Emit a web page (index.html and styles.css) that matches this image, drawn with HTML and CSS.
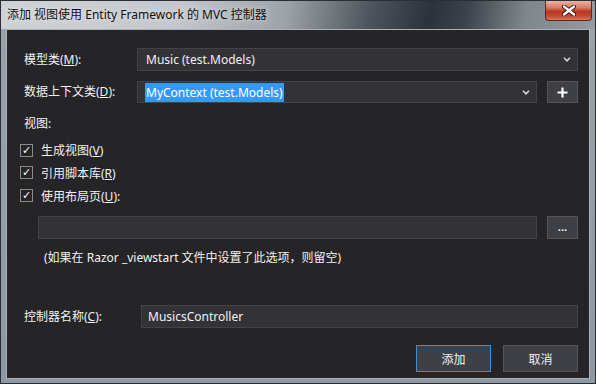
FILE: index.html
```html
<!DOCTYPE html>
<html>
<head>
  <meta charset="UTF-8">
  <title>添加 视图使用 Entity Framework 的 MVC 控制器</title>
  <link rel="stylesheet" href="styles.css">
</head>
<body>
<div class="window">
  <div class="titlebar">
    <span class="title">添加 视图使用 Entity Framework 的 MVC 控制器</span>
    <div class="close">
      <svg width="14" height="11" viewBox="0 0 14 11">
        <path d="M2 1.5 L12 9.5 M12 1.5 L2 9.5" stroke="#3a1008" stroke-width="4.2" stroke-linecap="round"/>
        <path d="M2 1.5 L12 9.5 M12 1.5 L2 9.5" stroke="#fff" stroke-width="2.4" stroke-linecap="round"/>
      </svg>
    </div>
  </div>
  <div class="client">
    <div class="row row-model">
      <div class="label">模型类(<u>M</u>):</div>
      <div class="select">
        <span>Music (test.Models)</span>
        <svg class="chev" width="8" height="5" viewBox="0 0 8 5"><path d="M1 0.8 L4 3.8 L7 0.8" fill="none" stroke="#d8d8d8" stroke-width="1.6"/></svg>
      </div>
    </div>
    <div class="row row-context">
      <div class="label">数据上下文类(<u>D</u>):</div>
      <div class="field">
        <div class="select">
          <span class="selected">MyContext (test.Models)</span>
          <svg class="chev" width="8" height="5" viewBox="0 0 8 5"><path d="M1 0.8 L4 3.8 L7 0.8" fill="none" stroke="#d8d8d8" stroke-width="1.6"/></svg>
        </div>
        <div class="btn btn-small">
          <svg width="11" height="11" viewBox="0 0 11 11"><path d="M5.5 0.5 V10.5 M0.5 5.5 H10.5" stroke="#fff" stroke-width="2.2"/></svg>
        </div>
      </div>
    </div>
    <div class="section">视图:</div>
    <div class="checks">
      <div class="check"><span class="box">✓</span><span>生成视图(<u>V</u>)</span></div>
      <div class="check"><span class="box">✓</span><span>引用脚本库(<u>R</u>)</span></div>
      <div class="check"><span class="box">✓</span><span>使用布局页(<u>U</u>):</span></div>
    </div>
    <div class="layout-row">
      <div class="input"></div>
      <div class="btn btn-small dots">...</div>
    </div>
    <div class="note">(如果在 Razor _viewstart 文件中设置了此选项，则留空)</div>
    <div class="row row-name">
      <div class="label">控制器名称(<u>C</u>):</div>
      <div class="input">MusicsController</div>
    </div>
    <div class="actions">
      <div class="btn btn-main default">添加</div>
      <div class="btn btn-main">取消</div>
    </div>
  </div>
</div>
</body>
</html>
```

FILE: styles.css
```css
body {
  margin: 0;
  padding: 0;
  background: #fff;
  font-family: "Noto Sans", "Noto Sans CJK SC", sans-serif;
  font-size: 12px;
}
.window {
  box-sizing: border-box;
  width: 596px;
  height: 384px;
  border: 1px solid #2a2f35;
  background: linear-gradient(to bottom, #9aa3aa, #8d98a1);
  display: flex;
  flex-direction: column;
}
.titlebar {
  height: 28px;
  display: flex;
  justify-content: space-between;
  align-items: flex-start;
  background: linear-gradient(100deg, #cfd2d5 0%, #c4c8cc 30%, #9ca2a7 48%, #4d545b 62%, #2b3239 72%, #3b4249 78%, #7f868c 88%, #959ba0 100%);
}
.title {
  margin: 6px 0 0 6px;
  color: #111;
  font-size: 12px;
  line-height: 16px;
  text-shadow: 0 0 6px rgba(255,255,255,.8);
}
.close {
  width: 45px;
  height: 19px;
  margin-right: 3px;
  border: 1px solid #5a2a22;
  border-top: none;
  border-radius: 0 0 4px 4px;
  background: linear-gradient(to bottom, #e6b3a6 0%, #d87b66 35%, #b83820 55%, #c24a30 80%, #d9785a 100%);
  display: flex;
  align-items: center;
  justify-content: center;
}
.client {
  flex: 1;
  margin: 0 5px 4px 5px;
  border: 1px solid #a9b3bb;
  background: #252527;
  color: #f1f1f1;
  padding: 0 11px 0 17px;
}
.row {
  display: grid;
  grid-template-columns: 113px 1fr;
  align-items: center;
}
.row-model {
  margin-top: 18px;
}
.row-context {
  margin-top: 10px;
}
.label {
  line-height: 16px;
}
.field {
  display: flex;
  gap: 10px;
}
.select,
.input {
  box-sizing: border-box;
  height: 23px;
  background: #333337;
  border: 1px solid #434346;
  display: flex;
  align-items: center;
  padding: 0 6px 0 8px;
  color: #f1f1f1;
  line-height: 19px;
}
.select {
  flex: 1;
  justify-content: space-between;
}
.row-context .select {
  height: 22px;
  padding-left: 7px;
}
.selected {
  background: #3399ff;
  color: #fff;
  padding: 0 1px;
}
.btn {
  box-sizing: border-box;
  background: #3f3f46;
  border: 1px solid #555558;
  color: #f1f1f1;
  display: flex;
  align-items: center;
  justify-content: center;
}
.btn-small {
  width: 31px;
  height: 22px;
}
.section {
  margin-top: 13px;
  line-height: 16px;
}
.checks {
  margin: 7px 0 0 -4px;
}
.check {
  height: 22px;
  display: flex;
  align-items: center;
  gap: 8px;
}
.check + .check {
  height: 23px;
}
.box {
  box-sizing: border-box;
  width: 13px;
  height: 13px;
  border: 1px solid #8c8c8c;
  background: #252527;
  color: #fff;
  font-family: "DejaVu Sans", sans-serif;
  font-size: 11px;
  font-weight: bold;
  line-height: 11px;
  text-align: center;
}
.layout-row {
  margin: 9px 0 0 14px;
  display: flex;
  gap: 10px;
}
.layout-row .input {
  flex: 1;
}
.layout-row .btn-small {
  height: 23px;
}
.dots {
  font-weight: bold;
  font-size: 11px;
  line-height: 10px;
  padding-bottom: 2px;
}
.note {
  margin: 11px 0 0 20px;
  line-height: 16px;
}
.row-name {
  margin-top: 39px;
  grid-template-columns: 117px 1fr;
}
.row-name .input {
  padding-left: 6px;
}
.actions {
  margin-top: 17px;
  display: flex;
  justify-content: flex-end;
  gap: 12px;
}
.btn-main {
  width: 75px;
  height: 27px;
}
.btn-main.default {
  border-color: #3a8fd8;
}
```
